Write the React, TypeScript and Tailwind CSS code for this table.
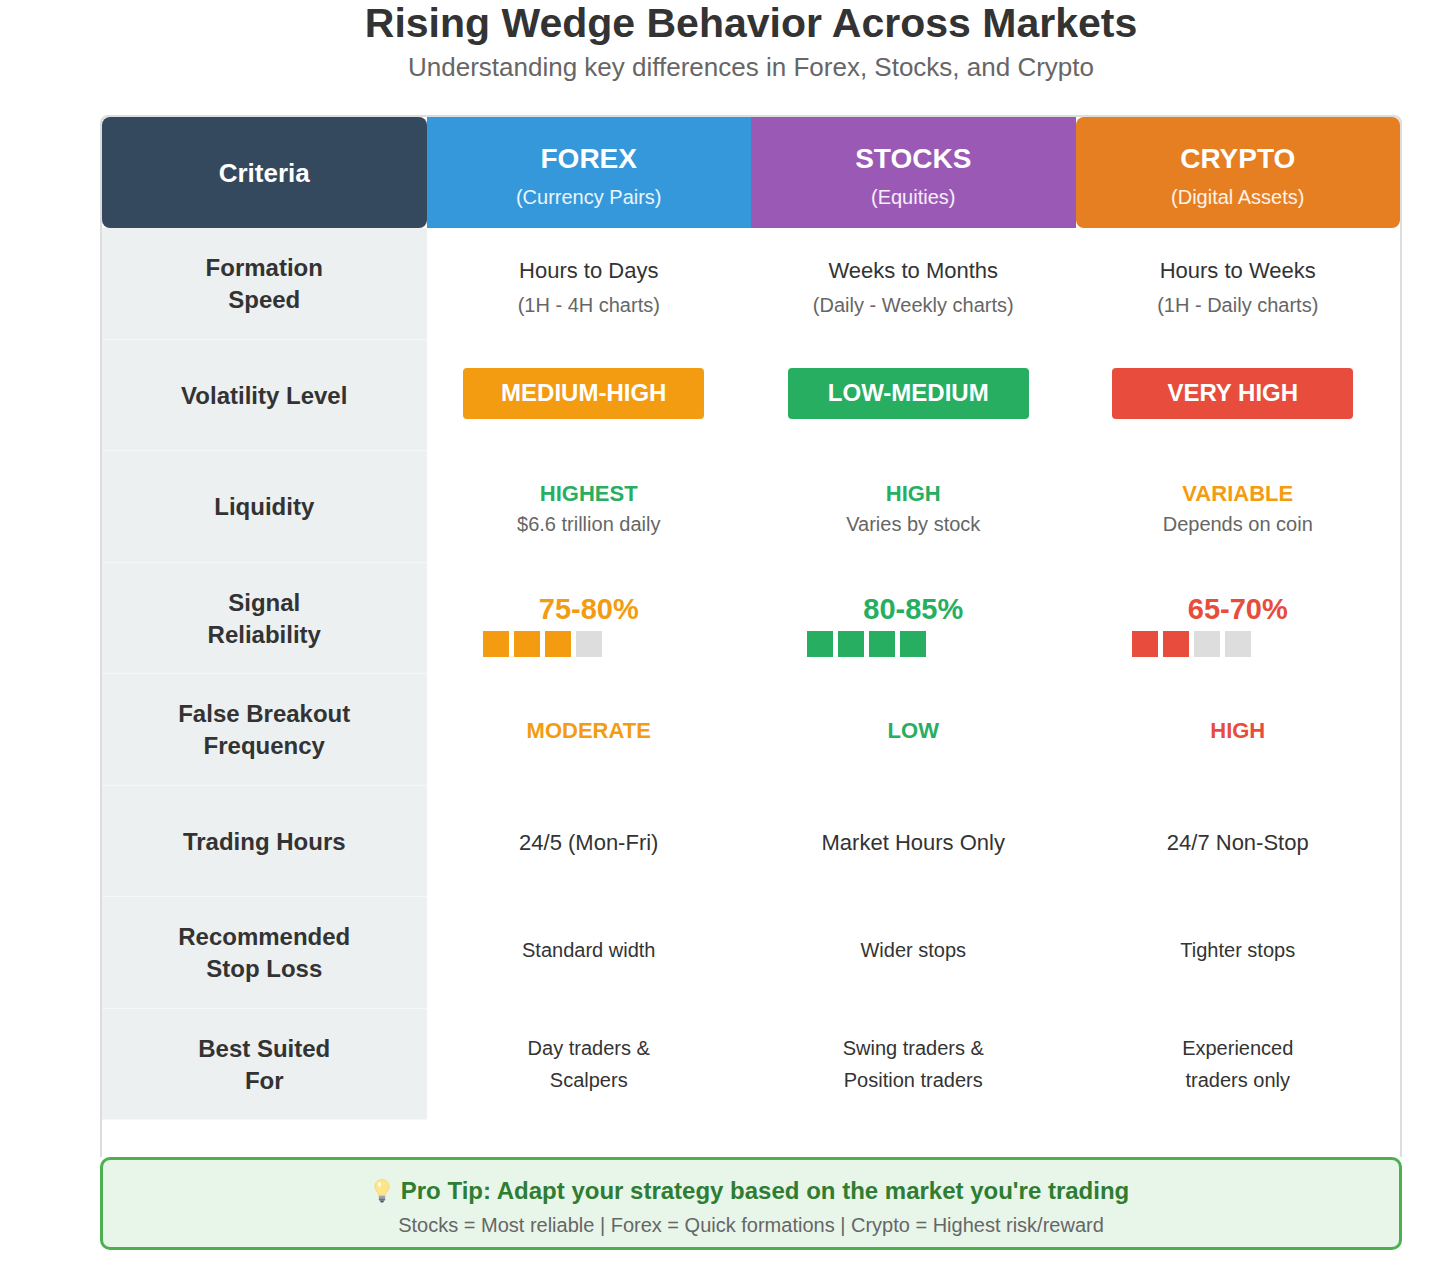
import type { ReactNode } from "react";

type Market = {
    name: string;
    sub: string;
    bg: string;
    rounded: string;
};

const markets: Market[] = [
    { name: 'FOREX', sub: '(Currency Pairs)', bg: 'bg-[#3498db]', rounded: '' },
    { name: 'STOCKS', sub: '(Equities)', bg: 'bg-[#9b59b6]', rounded: '' },
    { name: 'CRYPTO', sub: '(Digital Assets)', bg: 'bg-[#e67e22]', rounded: 'rounded-lg' },
];

const orange = 'text-[#f39c12]';
const green = 'text-[#27ae60]';
const red = 'text-[#e74c3c]';

function Speed({ main, sub }: { main: string; sub: string }) {
    return (
        <div className="flex flex-col items-center pt-[8px]">
            <span className="text-[22px] leading-[22px] text-[#333]">{main}</span>
            <span className="mt-[13px] text-[20px] leading-[20px] text-[#666]">{sub}</span>
        </div>
    );
}

function Badge({ label, bg }: { label: string; bg: string }) {
    return (
        <div className={`mb-[4px] mr-[10px] flex h-[51px] w-[241px] items-center justify-center rounded-[4px] ${bg}`}>
            <span className="text-[24px] font-bold leading-[24px] text-white">{label}</span>
        </div>
    );
}

function Liquidity({ level, color, note }: { level: string; color: string; note: string }) {
    return (
        <div className="flex flex-col items-center pt-[3px]">
            <span className={`text-[22px] font-bold leading-[22px] ${color}`}>{level}</span>
            <span className="mt-[9px] text-[20px] leading-[20px] text-[#666]">{note}</span>
        </div>
    );
}

function Reliability({ value, color, fill, filled }: { value: string; color: string; fill: string; filled: number }) {
    return (
        <div className="flex w-full flex-col pt-[16px]">
            <span className={`text-center text-[29px] font-bold leading-[29px] ${color}`}>{value}</span>
            <div className="ml-[56px] mt-[7px] flex gap-[5px]">
                {[0, 1, 2, 3].map(i => (
                    <div key={i} className={`h-[26px] w-[26px] ${i < filled ? fill : 'bg-[#dddddd]'}`} />
                ))}
            </div>
        </div>
    );
}

function Plain({ lines, size = 'text-[20px]', pad = '' }: { lines: string[]; size?: string; pad?: string }) {
    return (
        <div className={`flex flex-col items-center text-[#333] ${size} ${pad}`}>
            {lines.map(l => (
                <span key={l} className="leading-[32px]">{l}</span>
            ))}
        </div>
    );
}

const rows: { label: string[]; cells: ReactNode[] }[] = [
    {
        label: ['Formation', 'Speed'],
        cells: [
            <Speed main="Hours to Days" sub="(1H - 4H charts)" />,
            <Speed main="Weeks to Months" sub="(Daily - Weekly charts)" />,
            <Speed main="Hours to Weeks" sub="(1H - Daily charts)" />,
        ],
    },
    {
        label: ['Volatility Level'],
        cells: [
            <Badge label="MEDIUM-HIGH" bg="bg-[#f39c12]" />,
            <Badge label="LOW-MEDIUM" bg="bg-[#27ae60]" />,
            <Badge label="VERY HIGH" bg="bg-[#e74c3c]" />,
        ],
    },
    {
        label: ['Liquidity'],
        cells: [
            <Liquidity level="HIGHEST" color={green} note="$6.6 trillion daily" />,
            <Liquidity level="HIGH" color={green} note="Varies by stock" />,
            <Liquidity level="VARIABLE" color={orange} note="Depends on coin" />,
        ],
    },
    {
        label: ['Signal', 'Reliability'],
        cells: [
            <Reliability value="75-80%" color={orange} fill="bg-[#f39c12]" filled={3} />,
            <Reliability value="80-85%" color={green} fill="bg-[#27ae60]" filled={4} />,
            <Reliability value="65-70%" color={red} fill="bg-[#e74c3c]" filled={2} />,
        ],
    },
    {
        label: ['False Breakout', 'Frequency'],
        cells: [
            <span className={`pt-[2px] text-[22px] font-bold ${orange}`}>MODERATE</span>,
            <span className={`pt-[2px] text-[22px] font-bold ${green}`}>LOW</span>,
            <span className={`pt-[2px] text-[22px] font-bold ${red}`}>HIGH</span>,
        ],
    },
    {
        label: ['Trading Hours'],
        cells: [
            <Plain lines={['24/5 (Mon-Fri)']} size="text-[22px]" pad="pt-[3px]" />,
            <Plain lines={['Market Hours Only']} size="text-[22px]" pad="pt-[3px]" />,
            <Plain lines={['24/7 Non-Stop']} size="text-[22px]" pad="pt-[3px]" />,
        ],
    },
    {
        label: ['Recommended', 'Stop Loss'],
        cells: [
            <Plain lines={['Standard width']} pad="pb-[6px]" />,
            <Plain lines={['Wider stops']} pad="pb-[6px]" />,
            <Plain lines={['Tighter stops']} pad="pb-[6px]" />,
        ],
    },
    {
        label: ['Best Suited', 'For'],
        cells: [
            <Plain lines={['Day traders &', 'Scalpers']} />,
            <Plain lines={['Swing traders &', 'Position traders']} />,
            <Plain lines={['Experienced', 'traders only']} />,
        ],
    },
];

function Bulb() {
    return (
        <svg width="18" height="26" viewBox="0 0 18 26" className="inline-block">
            <path d="M9 1.5C4.8 1.5 2 4.6 2 8.4c0 2.6 1.3 4.3 2.5 5.8.9 1.1 1.4 2.2 1.5 3.6h6c.1-1.4.6-2.5 1.5-3.6 1.2-1.5 2.5-3.2 2.5-5.8C16 4.6 13.2 1.5 9 1.5z" fill="#fde68a" stroke="#f1d36b" strokeWidth="0.8" />
            <ellipse cx="6.5" cy="6.5" rx="1.6" ry="2.4" fill="#fffbe6" />
            <rect x="5.8" y="17.8" width="6.4" height="2.2" rx="0.6" fill="#9ca3af" />
            <rect x="5.8" y="20.2" width="6.4" height="2.2" rx="0.6" fill="#6b7280" />
            <path d="M6.8 22.6h4.4l-1 2h-2.4z" fill="#4b5563" />
        </svg>
    );
}

export default function App() {
    return (
        <div className="min-h-screen bg-white font-['Liberation_Sans',Arial,sans-serif]">
            <div className="ml-[100px] w-[1302px]">
                <h1 className="text-center text-[41px] font-bold leading-[46px] text-[#333]">
                    Rising Wedge Behavior Across Markets
                </h1>
                <p className="mt-[8px] text-center text-[26px] leading-[26px] text-[#666]">
                    Understanding key differences in Forex, Stocks, and Crypto
                </p>

                <div className="mt-[35px] rounded-t-lg border-x-2 border-t-2 border-[#dddddd] bg-white">
                    <div className="grid h-[111px] grid-cols-4">
                        <div className="flex items-center justify-center rounded-lg bg-[#34495e]">
                            <span className="pt-[2px] text-[26px] font-bold text-white">Criteria</span>
                        </div>
                        {markets.map(m => (
                            <div key={m.name} className={`flex flex-col items-center justify-center pt-[7px] ${m.bg} ${m.rounded}`}>
                                <span className="text-[28px] font-bold leading-[28px] text-white">{m.name}</span>
                                <span className="mt-[14px] text-[20px] leading-[20px] text-white/90">{m.sub}</span>
                            </div>
                        ))}
                    </div>

                    {rows.map((row, r) => (
                        <div key={r} className="grid h-[111.5px] grid-cols-4">
                            <div className="flex flex-col items-center justify-center border-b border-[#f4f6f7] bg-[#ecf0f1] pt-[2px]">
                                {row.label.map(l => (
                                    <span key={l} className="text-[24px] font-bold leading-[32px] text-[#333]">{l}</span>
                                ))}
                            </div>
                            {row.cells.map((cell, c) => (
                                <div key={c} className="flex items-center justify-center">
                                    {cell}
                                </div>
                            ))}
                        </div>
                    ))}

                    <div className="h-[37px]" />
                </div>

                <div className="flex h-[93px] flex-col items-center justify-center rounded-[10px] border-[3px] border-[#4caf50] bg-[#e8f5e9] pt-[5px]">
                    <div className="flex items-center gap-[10px]">
                        <Bulb />
                        <span className="text-[24px] font-bold leading-[24px] text-[#2e7d32]">
                            Pro Tip: Adapt your strategy based on the market you're trading
                        </span>
                    </div>
                    <span className="mt-[11px] text-[20px] leading-[20px] text-[#666]">
                        Stocks = Most reliable | Forex = Quick formations | Crypto = Highest risk/reward
                    </span>
                </div>
            </div>
        </div>
    );
}
